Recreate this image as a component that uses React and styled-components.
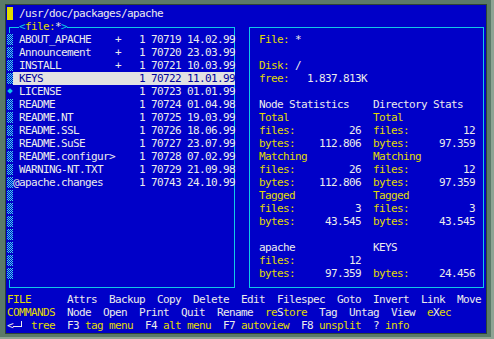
import React from "react";
import styled, { createGlobalStyle } from "styled-components";

const BLUE = "#0000c8";
const WHITE = "#ececec";
const YELLOW = "#e0dc00";
const CYAN = "#10c8e8";

const GlobalStyle = createGlobalStyle`
  html, body {
    margin: 0;
    padding: 0;
    background: #5b7a69;
  }
`;

const Frame = styled.div`
  width: 494px;
  height: 339px;
  box-sizing: border-box;
  padding: 5px 8px 6px 6px;
  background: #5b7a69;
  box-shadow: inset -3px -2px 0 #8ea494;
`;

const Screen = styled.div`
  width: 480px;
  height: 328px;
  box-sizing: border-box;
  padding: 2px 0 0 1px;
  background: ${BLUE};
  box-shadow: 0 0 0 1px #2e4438;
  display: flex;
  flex-direction: column;
  font-family: "DejaVu Sans Mono", "Liberation Mono", monospace;
  font-size: 11px;
  letter-spacing: -0.623px;
  line-height: 13px;
  color: ${WHITE};
  white-space: pre;
  overflow: hidden;
`;

const TitleRow = styled.div`
  display: flex;
  gap: 6px;
  height: 13px;
`;

const Cursor = styled.div`
  width: 6px;
  height: 13px;
  background: ${YELLOW};
`;

const Panels = styled.div`
  display: flex;
  align-items: flex-start;
  height: 273px;
`;

const Box = styled.div`
  box-sizing: border-box;
  margin-top: 7px;
  height: 261px;
  border: 1px solid ${CYAN};
  display: flex;
  flex-direction: column;
`;

const FileBox = styled(Box)`
  margin-left: 2px;
  width: 226px;
`;

const InfoBox = styled(Box)`
  margin-left: 14px;
  width: 235px;
  padding: 5px 0 0 9px;
`;

const BoxLabel = styled.div`
  align-self: flex-start;
  margin: -8px 0 0 9px;
  height: 13px;
  background: ${BLUE};
  color: ${CYAN};
`;

const FileList = styled.div`
  margin-left: -3px;
  display: flex;
  flex-direction: column;
`;

const FileRow = styled.div`
  display: flex;
  height: 13px;
`;

const ScrollCell = styled.div`
  flex: none;
  width: 6px;
  height: 13px;
  background: ${BLUE};

  &::before {
    content: "";
    display: block;
    ${({ $thumb }) =>
      $thumb
        ? `
      width: 4px;
      height: 4px;
      margin: 4px auto 0;
      background: ${CYAN};
      transform: rotate(45deg);
    `
        : `
      height: 11px;
      margin-top: 1px;
      background: repeating-conic-gradient(#40d8f0 0 25%, ${BLUE} 0 50%) 0 0 / 2px 2px;
    `}
  }
`;

const FileText = styled.div`
  width: 222px;
  height: 13px;
  background: ${({ $selected }) => ($selected ? "#e2e2e2" : "transparent")};
  color: ${({ $selected }) => ($selected ? "#00009c" : WHITE)};
`;

const Line = styled.div`
  display: block;
  height: 13px;
`;

const T = styled.span`
  color: ${({ $c }) => $c || WHITE};
`;

const StatGrid = styled.div`
  display: grid;
  grid-template-columns: 102px 102px;
  column-gap: 12px;
  grid-auto-rows: 13px;
`;

const StatCell = styled.div`
  display: flex;
  justify-content: space-between;
  color: ${({ $head }) => ($head === "white" ? WHITE : YELLOW)};
`;

const Value = styled.span`
  color: ${WHITE};
`;

const Menu = styled.div`
  display: flex;
  flex-direction: column;
`;

const EnterHook = styled.span`
  display: inline-block;
  vertical-align: top;
  box-sizing: border-box;
  width: 9px;
  height: 6px;
  margin: 2px 9px 0 0;
  border-right: 1px solid ${WHITE};
  border-bottom: 1px solid ${WHITE};
`;

const files = [
  { name: "ABOUT_APACHE", flag: "+", inode: "70719", date: "14.02.99" },
  { name: "Announcement", flag: "+", inode: "70720", date: "23.03.99" },
  { name: "INSTALL", flag: "+", inode: "70721", date: "10.03.99" },
  { name: "KEYS", inode: "70722", date: "11.01.99", selected: true },
  { name: "LICENSE", inode: "70723", date: "01.01.99", thumb: true },
  { name: "README", inode: "70724", date: "01.04.98" },
  { name: "README.NT", inode: "70725", date: "19.03.99" },
  { name: "README.SSL", inode: "70726", date: "18.06.99" },
  { name: "README.SuSE", inode: "70727", date: "23.07.99" },
  { name: "README.configur>", inode: "70728", date: "07.02.99" },
  { name: "WARNING-NT.TXT", inode: "70729", date: "21.09.98" },
  { name: "apache.changes", inode: "70743", date: "24.10.99", link: true },
];

const rows = Array.from({ length: 19 }, (_, i) => files[i] || null);

const fileLine = (f) =>
  `${f.link ? "@" : " "}${f.name.padEnd(16)}${f.flag || " "}   1 ${f.inode} ${f.date}`;

// each row of the stats area: [left, right]
const stats = [
  [{ head: "Node Statistics", tone: "white" }, { head: "Directory Stats", tone: "white" }],
  [{ head: "Total" }, { head: "Total" }],
  [{ label: "files:", value: "26" }, { label: "files:", value: "12" }],
  [{ label: "bytes:", value: "112.806" }, { label: "bytes:", value: "97.359" }],
  [{ head: "Matching" }, { head: "Matching" }],
  [{ label: "files:", value: "26" }, { label: "files:", value: "12" }],
  [{ label: "bytes:", value: "112.806" }, { label: "bytes:", value: "97.359" }],
  [{ head: "Tagged" }, { head: "Tagged" }],
  [{ label: "files:", value: "3" }, { label: "files:", value: "3" }],
  [{ label: "bytes:", value: "43.545" }, { label: "bytes:", value: "43.545" }],
  [null, null],
  [{ head: "apache", tone: "white" }, { head: "KEYS", tone: "white" }],
  [{ label: "files:", value: "12" }, null],
  [{ label: "bytes:", value: "97.359" }, { label: "bytes:", value: "24.456" }],
];

const StatItem = ({ item }) => {
  if (!item) return <StatCell />;
  if (item.head) return <StatCell $head={item.tone}>{item.head}</StatCell>;
  return (
    <StatCell>
      {item.label}
      <Value>{item.value}</Value>
    </StatCell>
  );
};

// command word: lowercase lead-in in yellow, hotkey and capitalised words in white
const Cmd = ({ word }) => {
  const i = word.search(/[A-Z]/);
  if (i <= 0) return <T>{word}</T>;
  return (
    <>
      <T $c={YELLOW}>{word.slice(0, i)}</T>
      <T>{word[i]}</T>
      <T $c={YELLOW}>{word.slice(i + 1)}</T>
    </>
  );
};

const CommandLine = ({ title, words }) => (
  <Line>
    <T $c={YELLOW}>{title.padEnd(10)}</T>
    {words.map((w, i) => (
      <React.Fragment key={w}>
        {i > 0 && <T>{"  "}</T>}
        <Cmd word={w} />
      </React.Fragment>
    ))}
  </Line>
);

const keys = [
  ["F3", "tag menu"],
  ["F4", "alt menu"],
  ["F7", "autoview"],
  ["F8", "unsplit"],
  ["?", "info"],
];

export default function App() {
  return (
    <>
      <GlobalStyle />
      <Frame>
        <Screen>
          <TitleRow>
            <Cursor />
            <span>/usr/doc/packages/apache</span>
          </TitleRow>

          <Panels>
            <FileBox>
              <BoxLabel>
                {"<"}
                <T $c={YELLOW}>file:</T>
                <T>*</T>
                {">"}
              </BoxLabel>
              <FileList>
                {rows.map((f, i) => (
                  <FileRow key={i}>
                    <ScrollCell $thumb={f && f.thumb} />
                    {f && <FileText $selected={f.selected}>{fileLine(f)}</FileText>}
                  </FileRow>
                ))}
              </FileList>
            </FileBox>

            <InfoBox>
              <Line>
                <T $c={YELLOW}>File: </T>
                <T>*</T>
              </Line>
              <Line />
              <Line>
                <T $c={YELLOW}>Disk: </T>
                <T>/</T>
              </Line>
              <Line>
                <T $c={YELLOW}>free:   </T>
                <T>1.837.813K</T>
              </Line>
              <Line />
              <StatGrid>
                {stats.map(([l, r], i) => (
                  <React.Fragment key={i}>
                    <StatItem item={l} />
                    <StatItem item={r} />
                  </React.Fragment>
                ))}
              </StatGrid>
            </InfoBox>
          </Panels>

          <Menu>
            <CommandLine
              title="FILE"
              words={["Attrs", "Backup", "Copy", "Delete", "Edit", "Filespec", "Goto", "Invert", "Link", "Move"]}
            />
            <CommandLine
              title="COMMANDS"
              words={["Node", "Open", "Print", "Quit", "Rename", "reStore", "Tag", "Untag", "View", "eXec"]}
            />
            <Line>
              <T>{"<"}</T>
              <EnterHook />
              <T $c={YELLOW}>tree</T>
              {keys.map(([k, d]) => (
                <React.Fragment key={k}>
                  <T>{"  " + k + " "}</T>
                  <T $c={YELLOW}>{d}</T>
                </React.Fragment>
              ))}
            </Line>
          </Menu>
        </Screen>
      </Frame>
    </>
  );
}
